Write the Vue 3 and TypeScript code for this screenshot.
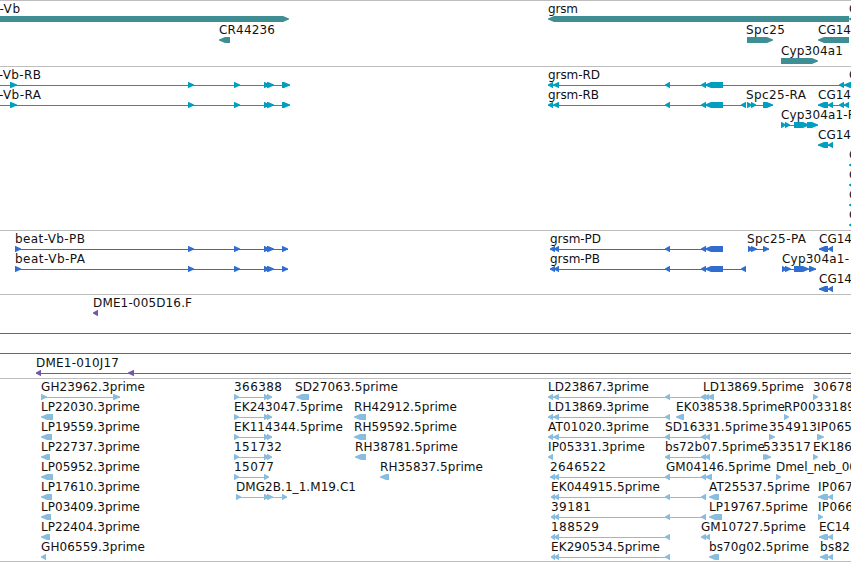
<template>
  <main class="browser">
    <section
      v-for="track in tracks"
      :key="track.name"
      class="track"
      :class="track.name"
    >
      <svg class="canvas" width="851" :height="track.height">
        <g v-for="(f, i) in track.features" :key="i">
          <rect
            v-if="f.blocks.length > 1 || f.end"
            class="intron"
            :x="f.start ?? f.blocks[0][0]"
            :y="f.row * track.pitch + 18"
            :width="lineWidth(f)"
            height="1"
          />
          <path
            v-for="(b, j) in f.blocks"
            :key="j"
            class="exon"
            :d="arrow(b, f.row * track.pitch + 15, f.dir)"
          />
        </g>
        <template v-for="(f, i) in track.features" :key="'t' + i">
          <text
            v-if="f.label"
            class="label"
            :x="f.x"
            :y="f.row * track.pitch + 12"
            :textLength="labelWidth(f.label)"
          >{{ f.label }}</text>
        </template>
      </svg>
    </section>
  </main>
</template>

<script setup lang="ts">
type Block = [number, number];

interface Feature {
  label: string;
  x: number;
  row: number;
  dir: number;
  blocks: Block[];
  start?: number;
  end?: number;
}

interface Track {
  name: string;
  height: number;
  pitch: number;
  features: Feature[];
}

const FWD = 1;
const REV = -1;

// whole-pixel advances of the label font, 8 unless listed
const advances: Record<string, number> = {
  "-": 5, ".": 4, _: 6,
  D: 9, E: 7, F: 7, G: 9, H: 9, I: 4, J: 4, L: 6, M: 10, P: 7, T: 7, V: 9,
  c: 7, e: 7, i: 3, l: 3, m: 11, r: 5, s: 6, t: 5, y: 6,
};

function labelWidth(label: string) {
  return [...label].reduce((sum, ch) => sum + (advances[ch] ?? 8), 0);
}

function feat(
  label: string,
  x: number,
  row: number,
  dir: number,
  blocks: Block[],
  start?: number,
  end?: number
): Feature {
  return { label, x, row, dir, blocks, start, end };
}

function lineWidth(f: Feature) {
  const from = f.start ?? f.blocks[0][0];
  const to = f.end ?? f.blocks[f.blocks.length - 1][1];
  return to - from;
}

// box with a blunt pointed end, or a plain triangle when the block is short
function arrow([a, b]: Block, y: number, dir: number) {
  const head = Math.min(6, b - a - 0.5);
  const tip = `${y + 2.4}V${y + 3.6}`;
  if (dir === FWD) {
    return `M${a} ${y}H${b - head}L${b} ${tip}L${b - head} ${y + 6}H${a}Z`;
  }
  return `M${b} ${y}H${a + head}L${a} ${tip}L${a + head} ${y + 6}H${b}Z`;
}

const beat: Block[] = [[188, 194], [234, 240], [264, 270], [267, 274]];
const grsm: Block[] = [[665, 670], [701, 706], [705, 723]];
const est: Block[] = [[234, 239], [264, 269], [267, 272]];
const ld: Block[] = [[548, 553], [553, 559], [665, 670]];
const ek: Block[] = [[551, 555], [554, 559], [665, 670]];

const tracks: Track[] = [
  {
    name: "genes",
    height: 65,
    pitch: 21,
    features: [
      feat("beat-Vb", -30, 0, FWD, [[-20, 289]]),
      feat("grsm", 548, 0, REV, [[548, 849]]),
      feat("C", 849, 0, REV, [[849, 870]]),
      feat("CR44236", 219, 1, REV, [[219, 230]]),
      feat("Spc25", 746, 1, FWD, [[747, 773]]),
      feat("CG14", 818, 1, REV, [[818, 849]]),
      feat("Cyp304a1", 781, 2, FWD, [[781, 818]]),
    ],
  },
  {
    name: "transcripts",
    height: 163,
    pitch: 20,
    features: [
      feat("beat-Vb-RB", -30, 0, FWD, [[10, 17], ...beat, [282, 290]], -20),
      feat("grsm-RD", 548, 0, REV, [[548, 553], [553, 559], ...grsm, [839, 844], [844, 851]]),
      feat("C", 849, 0, REV, []),
      feat("beat-Vb-RA", -30, 1, FWD, [[10, 17], ...beat, [282, 290]], -20),
      feat("grsm-RB", 548, 1, REV, [[548, 553], [553, 559], ...grsm, [741, 746]]),
      feat("Spc25-RA", 746, 1, FWD, [[747, 752], [751, 756], [763, 773]]),
      feat("CG14", 818, 1, REV, [[818, 828], [828, 833], [839, 844], [844, 849]]),
      feat("Cyp304a1-RA", 781, 2, FWD, [[781, 786], [785, 790], [794, 809], [807, 818]]),
      feat("CG14", 818, 3, REV, [[818, 828], [828, 833]]),
      ...[4, 5, 6, 7].map((row) => feat("C", 849, row, REV, [[849, 858]])),
    ],
  },
  {
    name: "proteins",
    height: 63,
    pitch: 20,
    features: [
      feat("beat-Vb-PB", 15, 0, FWD, [[15, 21], ...beat, [282, 288]]),
      feat("grsm-PD", 550, 0, REV, [[550, 555], [554, 559], ...grsm]),
      feat("Spc25-PA", 747, 0, FWD, [[748, 753], [751, 757], [763, 769]]),
      feat("CG14", 819, 0, REV, [[819, 828], [828, 833]]),
      feat("beat-Vb-PA", 15, 1, FWD, [[15, 21], ...beat, [282, 288]]),
      feat("grsm-PB", 550, 1, REV, [[550, 555], [554, 559], ...grsm, [741, 746]]),
      feat("Cyp304a1-", 782, 1, FWD, [[782, 787], [785, 791], [794, 809], [809, 816]]),
      feat("CG14", 819, 2, REV, [[819, 828], [828, 833]]),
    ],
  },
  {
    name: "clones",
    height: 83,
    pitch: 20,
    features: [
      feat("DME1-005D16.F", 93, 0, REV, [[93, 98]]),
      feat("", 0, 1, FWD, [], 0, 851),
      feat("", 0, 2, FWD, [], 0, 851),
      feat("DME1-010J17", 36, 3, REV, [[36, 41], [128, 134]], 36, 851),
    ],
  },
  {
    name: "ests",
    height: 182,
    pitch: 20,
    features: [
      feat("GH23962.3prime", 41, 0, FWD, [[41, 47], [113, 120]]),
      feat("LP22030.3prime", 41, 1, REV, [[41, 53]]),
      feat("LP19559.3prime", 41, 2, REV, [[41, 52]]),
      feat("LP22737.3prime", 41, 3, REV, [[41, 50]]),
      feat("LP05952.3prime", 41, 4, REV, [[41, 53]]),
      feat("LP17610.3prime", 41, 5, REV, [[41, 52]]),
      feat("LP03409.3prime", 41, 6, REV, [[41, 51]]),
      feat("LP22404.3prime", 41, 7, REV, [[41, 50]]),
      feat("GH06559.3prime", 41, 8, REV, [[41, 46]]),
      feat("366388", 234, 0, FWD, est),
      feat("EK243047.5prime", 234, 1, FWD, est),
      feat("EK114344.5prime", 234, 2, FWD, est),
      feat("151732", 234, 3, FWD, est),
      feat("15077", 234, 4, FWD, [[234, 239], [264, 269]]),
      feat("DMG2B.1_1.M19.C1", 236, 5, FWD, [[236, 241], [264, 269], [267, 273], [282, 287]]),
      feat("SD27063.5prime", 295, 0, REV, [[296, 309]]),
      feat("RH42912.5prime", 354, 1, REV, [[354, 366]]),
      feat("RH59592.5prime", 354, 2, REV, [[354, 366]]),
      feat("RH38781.5prime", 355, 3, REV, [[355, 366]]),
      feat("RH35837.5prime", 380, 4, REV, [[380, 389]]),
      feat("LD23867.3prime", 548, 0, REV, [...ld, [701, 706]]),
      feat("LD13869.3prime", 548, 1, REV, ld),
      feat("AT01020.3prime", 548, 2, REV, ld),
      feat("IP05331.3prime", 548, 3, REV, [[548, 553]]),
      feat("2646522", 550, 4, REV, [[550, 555], [554, 559], [665, 670]]),
      feat("EK044915.5prime", 551, 5, REV, [...ek, [701, 706]]),
      feat("39181", 551, 6, REV, [...ek, [701, 706]]),
      feat("188529", 551, 7, REV, ek),
      feat("EK290534.5prime", 551, 8, REV, ek),
      feat("LD13869.5prime", 703, 0, REV, [[701, 706], [704, 709], [707, 714]]),
      feat("EK038538.5prime", 676, 1, REV, [[676, 684]]),
      feat("SD16331.5prime", 665, 2, REV, [[665, 670], [701, 706], [705, 710]]),
      feat("bs72b07.5prime", 665, 3, REV, [[665, 670], [701, 706], [705, 710]]),
      feat("GM04146.5prime", 666, 4, REV, [[665, 670], [701, 706], [705, 712]]),
      feat("AT25537.5prime", 709, 5, REV, [[709, 719]]),
      feat("LP19767.5prime", 709, 6, REV, [[709, 722]]),
      feat("GM10727.5prime", 701, 7, REV, [[701, 706], [705, 710]]),
      feat("bs70g02.5prime", 709, 8, REV, [[709, 719]]),
      feat("30678", 813, 0, FWD, [[813, 818]]),
      feat("RP0033189", 784, 1, FWD, [[784, 789]]),
      feat("354913", 769, 2, FWD, [[769, 775]]),
      feat("IP065", 817, 2, FWD, [[817, 824]]),
      feat("533517", 763, 3, FWD, [[763, 768], [765, 771]]),
      feat("EK186", 813, 3, FWD, [[813, 818]]),
      feat("Dmel_neb_00", 776, 4, FWD, [[776, 781]]),
      feat("IP067", 818, 5, REV, [[818, 828], [828, 833]]),
      feat("IP066", 818, 6, FWD, [[818, 823]]),
      feat("EC14", 819, 7, REV, [[819, 828], [828, 833]]),
      feat("bs82", 820, 8, REV, [[820, 828], [828, 833]]),
    ],
  },
];
</script>

<style>
body {
  background: #fff;
}
</style>

<style scoped>
.browser {
  display: flex;
  flex-direction: column;
  width: 851px;
  height: 562px;
  overflow: hidden;
}

.track {
  flex: none;
  border-top: 1px solid #bebebe;
}

.track:last-child {
  border-bottom: 1px solid #bebebe;
}

.canvas {
  display: block;
  overflow: hidden;
}

.label {
  fill: #111;
  font: 12px "DejaVu Sans", sans-serif;
}

.intron {
  shape-rendering: crispEdges;
}

.genes {
  fill: #3f8e93;
}

.transcripts {
  fill: #009ebf;
}

.proteins {
  fill: #306dd0;
}

.clones {
  fill: #7557a7;
}

.ests {
  fill: #89bdde;
}
</style>
